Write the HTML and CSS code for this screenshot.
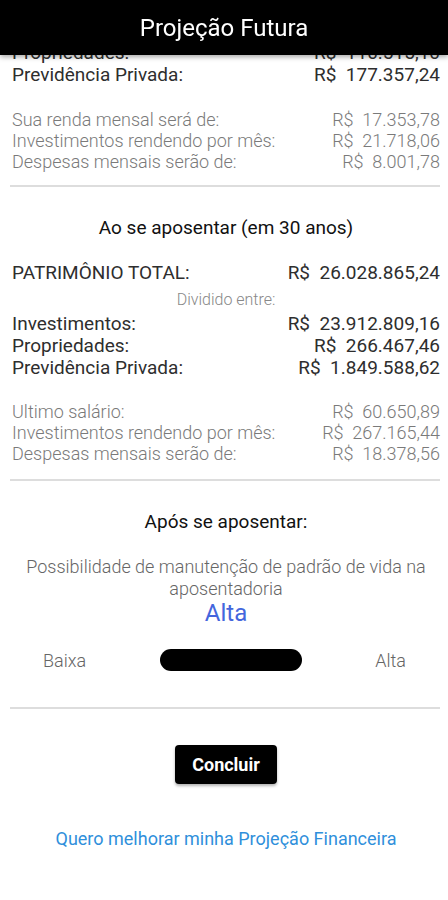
FILE: index.html
```html
<!DOCTYPE html>
<html lang="pt-br">
  <head>
    <meta charset="UTF-8" />
    <meta name="viewport" content="width=device-width, initial-scale=1.0" />
    <title>Projeção Futura</title>
    <link rel="stylesheet" href="styles.css">
  </head>
  <body>
    <header class="topo">
      <h1>Projeção Futura</h1>
    </header>

    <main class="conteudo">
      <div class="grupo">
        <div class="linha"><span>Propriedades:</span><span>R$&nbsp; 110.515,10</span></div>
        <div class="linha"><span>Previdência Privada:</span><span>R$&nbsp; 177.357,24</span></div>
      </div>

      <div class="grupo cinza primeiro-cinza">
        <div class="linha"><span>Sua renda mensal será de:</span><span>R$&nbsp; 17.353,78</span></div>
        <div class="linha"><span>Investimentos rendendo por mês:</span><span>R$&nbsp; 21.718,06</span></div>
        <div class="linha"><span>Despesas mensais serão de:</span><span>R$&nbsp; 8.001,78</span></div>
      </div>

      <hr class="divisor primeiro" />

      <h2 class="titulo">Ao se aposentar (em 30 anos)</h2>

      <div class="linha total"><span>PATRIMÔNIO TOTAL:</span><span>R$&nbsp; 26.028.865,24</span></div>
      <p class="dividido">Dividido entre:</p>

      <div class="grupo">
        <div class="linha"><span>Investimentos:</span><span>R$&nbsp; 23.912.809,16</span></div>
        <div class="linha"><span>Propriedades:</span><span>R$&nbsp; 266.467,46</span></div>
        <div class="linha"><span>Previdência Privada:</span><span>R$&nbsp; 1.849.588,62</span></div>
      </div>

      <div class="grupo cinza segundo-cinza">
        <div class="linha"><span>Ultimo salário:</span><span>R$&nbsp; 60.650,89</span></div>
        <div class="linha"><span>Investimentos rendendo por mês:</span><span>R$&nbsp; 267.165,44</span></div>
        <div class="linha"><span>Despesas mensais serão de:</span><span>R$&nbsp; 18.378,56</span></div>
      </div>

      <hr class="divisor segundo" />

      <h2 class="titulo apos">Após se aposentar:</h2>

      <p class="possibilidade">Possibilidade de manutenção de padrão de vida na aposentadoria</p>
      <p class="nivel">Alta</p>

      <div class="escala">
        <span>Baixa</span>
        <div class="barra"></div>
        <span>Alta</span>
      </div>

      <hr class="divisor terceiro" />

      <div class="acoes">
        <button class="concluir">Concluir</button>
        <a class="melhorar" href="#">Quero melhorar minha Projeção Financeira</a>
      </div>
    </main>
  </body>
</html>
```

FILE: styles.css
```css
body {
  margin: 0;
  background-color: #fff;
  font-family: Roboto, "Noto Sans", sans-serif;
  color: #222;
  overflow: hidden;
}

.topo {
  position: fixed;
  top: 0;
  left: 0;
  right: 0;
  height: 55px;
  background-color: #000;
  box-shadow: 0 2px 5px rgba(0, 0, 0, 0.35);
  display: flex;
  justify-content: center;
  align-items: center;
  z-index: 5;
}

.topo h1 {
  margin: 0;
  color: #fff;
  font-size: 24px;
  font-weight: 400;
  line-height: 28px;
}

.conteudo {
  padding: 42px 8px 0 12px;
}

.linha {
  display: flex;
  justify-content: space-between;
  font-size: 19px;
  line-height: 22px;
  color: #2e2e2e;
}

.cinza .linha {
  font-size: 18px;
  line-height: 21px;
  font-weight: 300;
  color: #7a7a7a;
}

.primeiro-cinza {
  margin-top: 23px;
}

.segundo-cinza {
  margin-top: 22px;
}

.divisor {
  border: none;
  height: 2px;
  background-color: #ddd;
  margin: 0 0 0 -2px;
}

.divisor.primeiro {
  margin-top: 13px;
}

.divisor.segundo {
  margin-top: 15px;
}

.divisor.terceiro {
  margin-top: 36px;
}

.titulo {
  margin: 29px 0 0;
  text-align: center;
  font-size: 19px;
  font-weight: 400;
  line-height: 24px;
  color: #111;
}

.total {
  margin-top: 22px;
}

.dividido {
  margin: 6px 0 3px;
  text-align: center;
  font-size: 16px;
  font-weight: 300;
  line-height: 20px;
  color: #888;
}

.possibilidade {
  margin: 22px 0 0;
  text-align: center;
  font-size: 18px;
  font-weight: 300;
  line-height: 22px;
  color: #666;
}

.nivel {
  margin: 0;
  text-align: center;
  font-size: 24px;
  line-height: 26px;
  color: #4466dd;
}

.escala {
  margin-top: 23px;
  display: flex;
  align-items: center;
  justify-content: space-between;
  padding: 0 34px 0 31px;
  font-size: 18px;
  font-weight: 300;
  color: #666;
}

.barra {
  width: 142px;
  height: 22px;
  border-radius: 11px;
  background-color: #000;
}

.acoes {
  display: flex;
  flex-direction: column;
  align-items: center;
}

.concluir {
  margin-top: 36px;
  width: 102px;
  height: 39px;
  border: none;
  border-radius: 4px;
  background-color: #000;
  color: #fff;
  font-family: Roboto, sans-serif;
  font-size: 18px;
  font-weight: 700;
  box-shadow: 0 2px 3px rgba(0, 0, 0, 0.3);
}

.melhorar {
  margin-top: 45px;
  font-size: 18px;
  line-height: 20px;
  color: #2f8fdb;
  text-decoration: none;
}
```
